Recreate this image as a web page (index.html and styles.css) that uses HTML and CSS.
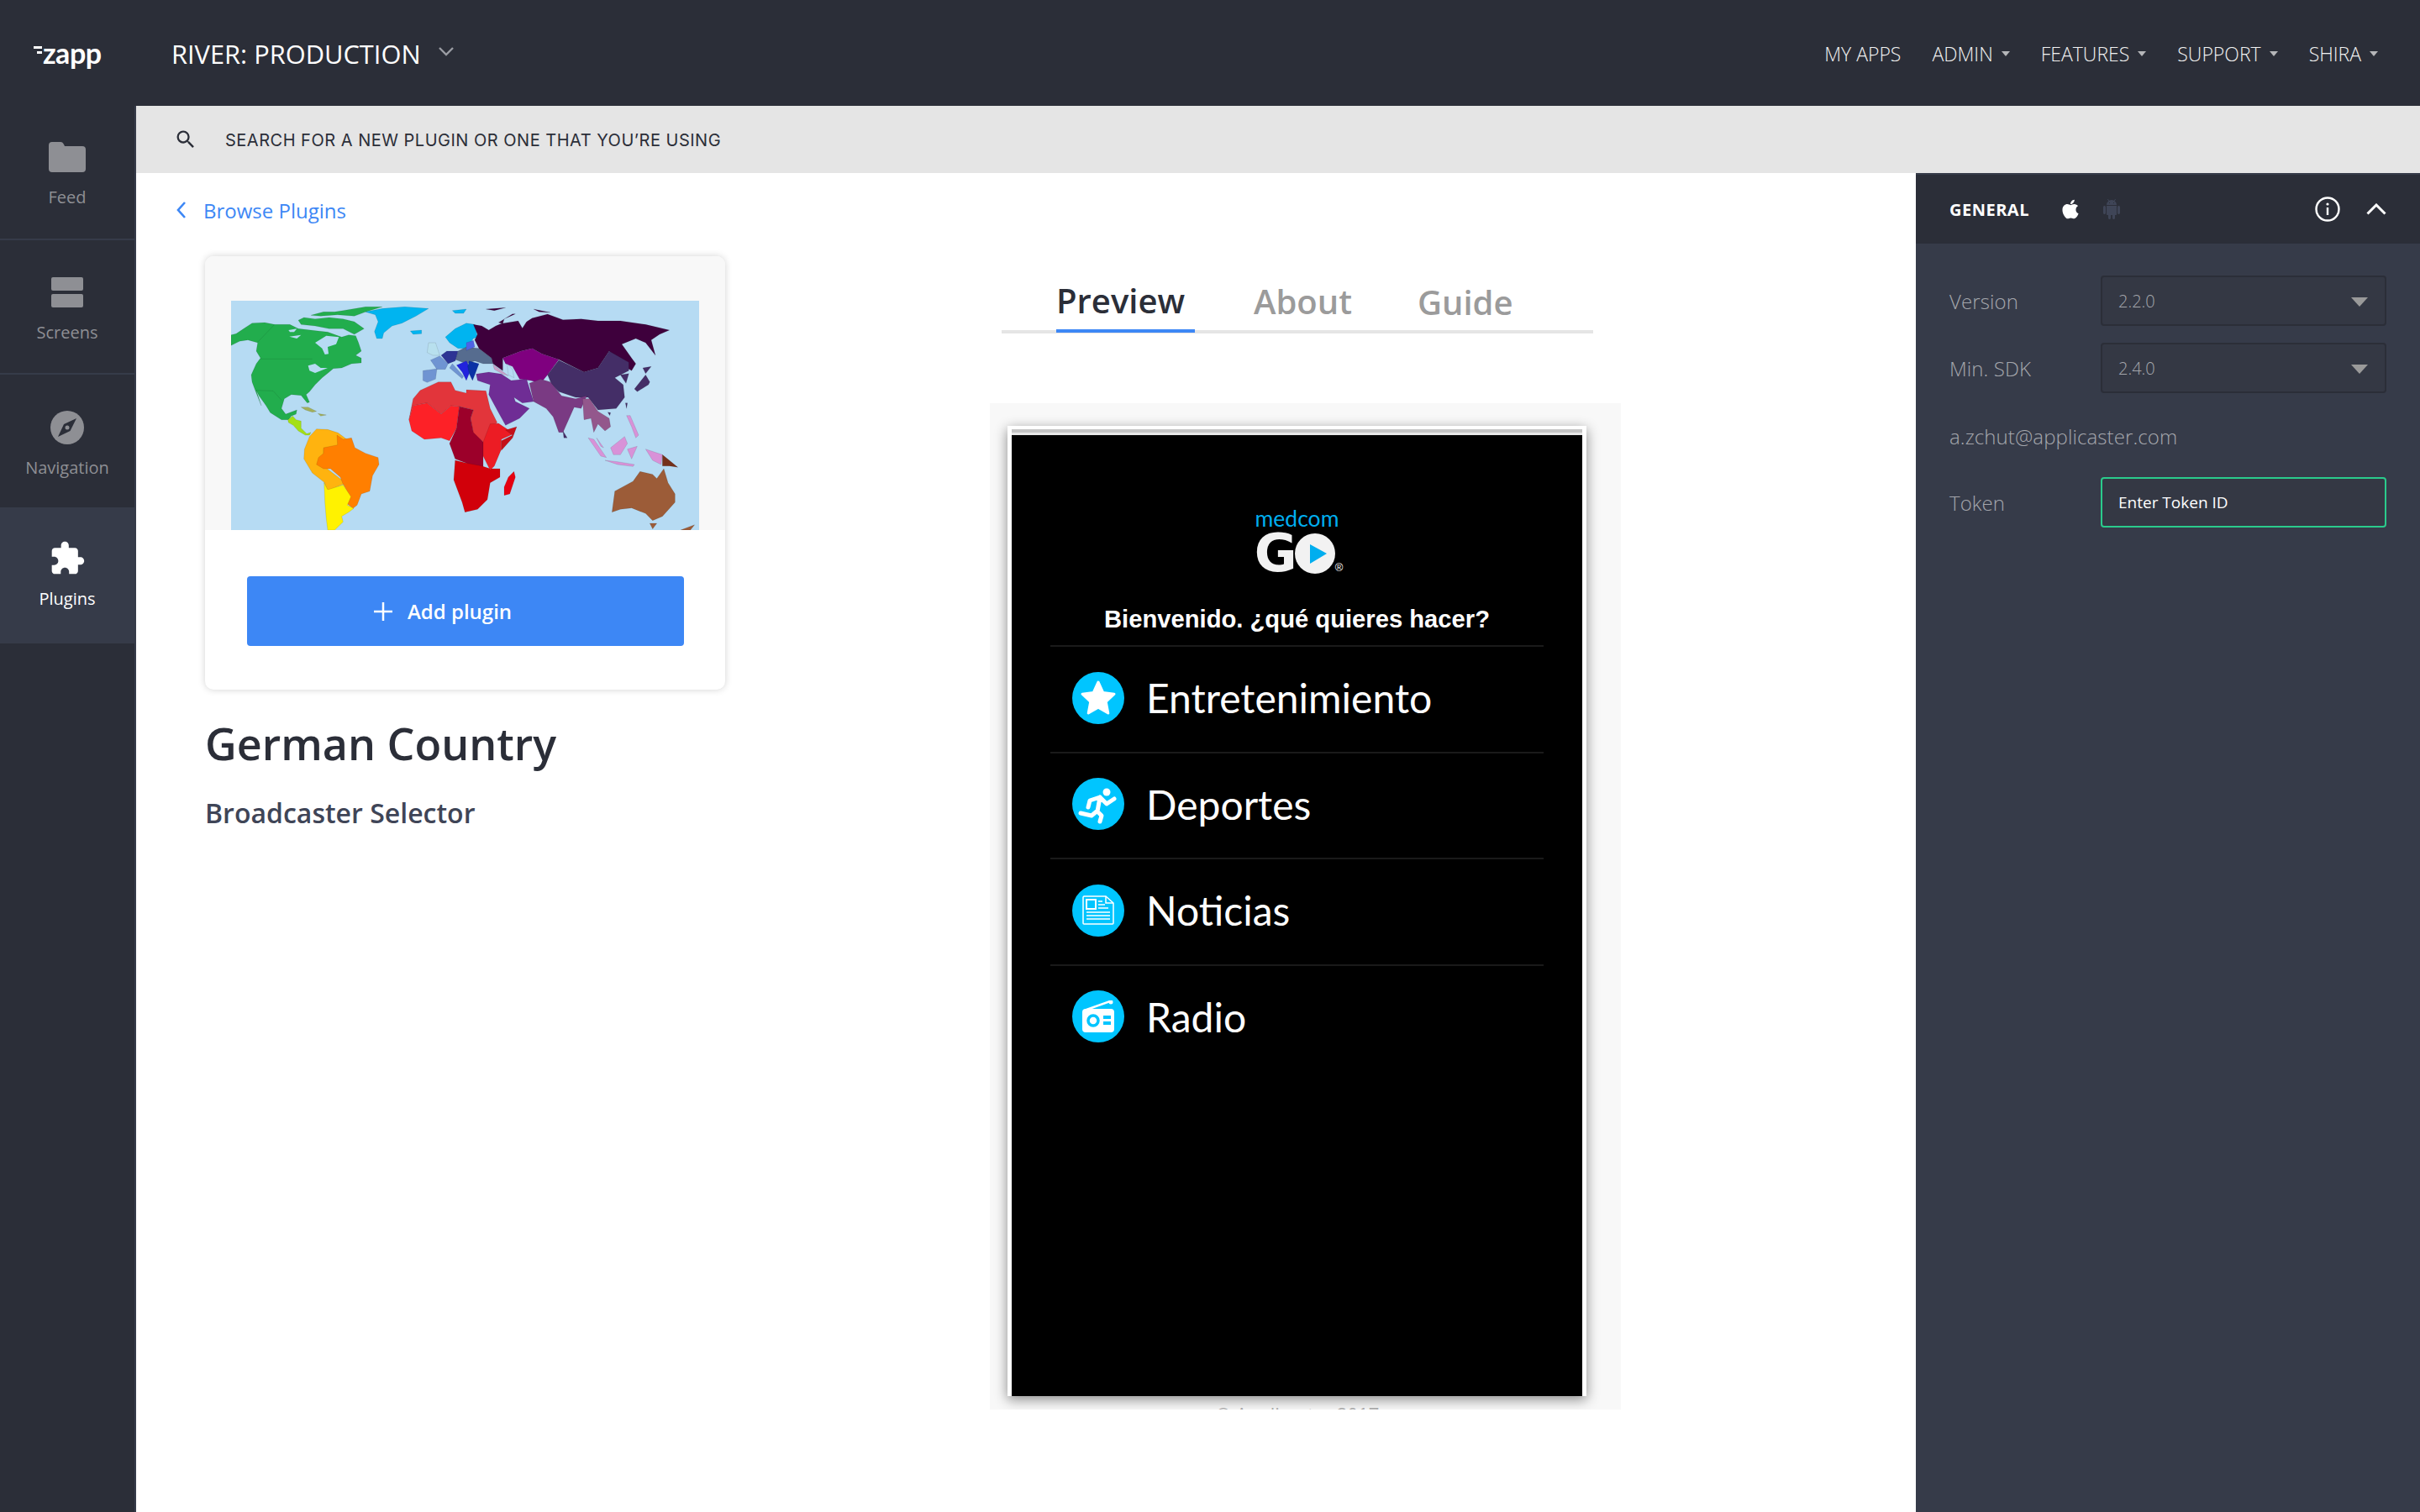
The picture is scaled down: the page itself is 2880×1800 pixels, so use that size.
FILE: index.html
```html
<!DOCTYPE html>
<html lang="en">
<head>
  <meta charset="UTF-8">
  <title>Zapp - Plugins</title>
  <link rel="stylesheet" href="styles.css">
</head>
<body>

<!-- Top bar -->
<header class="topbar">
  <div class="logo">
    <span class="logo-dashes"><i></i><i></i></span>
    <span class="logo-text">zapp</span>
  </div>
  <div class="app-title">RIVER: PRODUCTION</div>
  <svg class="title-chevron" viewBox="0 0 20 12"><path d="M2 2l8 8 8-8" fill="none" stroke="#9a9ca3" stroke-width="2.4"/></svg>
  <nav class="topnav">
    <a class="topnav-item">MY APPS</a>
    <a class="topnav-item has-caret">ADMIN</a>
    <a class="topnav-item has-caret">FEATURES</a>
    <a class="topnav-item has-caret">SUPPORT</a>
    <a class="topnav-item has-caret">SHIRA</a>
  </nav>
</header>

<div class="shell">

  <!-- Sidebar -->
  <aside class="sidebar">
    <a class="side-item">
      <span class="side-icon">
        <svg width="44" height="36" viewBox="0 0 44 36"><path d="M4 0h10c2 0 3 1 4 3l1 2h21a4 4 0 0 1 4 4v23a4 4 0 0 1-4 4H4a4 4 0 0 1-4-4V4a4 4 0 0 1 4-4z" fill="#8e8f94"/></svg>
      </span>
      Feed
    </a>
    <a class="side-item">
      <span class="side-icon">
        <svg width="38" height="36" viewBox="0 0 38 36"><rect width="38" height="16" rx="2" fill="#8e8f94"/><rect y="20" width="38" height="16" rx="2" fill="#8e8f94"/></svg>
      </span>
      Screens
    </a>
    <a class="side-item">
      <span class="side-icon">
        <svg width="40" height="40" viewBox="0 0 40 40"><circle cx="20" cy="20" r="20" fill="#8e8f94"/><path d="M31 9l-7.5 15L9 31l7-15z" fill="#2b2e38"/><circle cx="20" cy="20" r="2.5" fill="#8e8f94"/></svg>
      </span>
      Navigation
    </a>
    <a class="side-item active">
      <span class="side-icon">
        <svg width="44" height="44" viewBox="0 0 24 24"><path d="M20.5 11H19V7c0-1.1-.9-2-2-2h-4V3.5C13 2.12 11.88 1 10.5 1S8 2.12 8 3.5V5H4c-1.1 0-1.99.9-1.99 2v3.8H3.5c1.49 0 2.7 1.21 2.7 2.7s-1.21 2.7-2.7 2.7H2V20c0 1.1.9 2 2 2h3.8v-1.5c0-1.49 1.21-2.7 2.7-2.7 1.49 0 2.7 1.21 2.7 2.7V22H17c1.1 0 2-.9 2-2v-4h1.5c1.38 0 2.5-1.12 2.5-2.5S21.88 11 20.5 11z" fill="#fff"/></svg>
      </span>
      Plugins
    </a>
  </aside>

  <div class="main">

    <!-- Search -->
    <div class="searchbar">
      <svg class="search-icon" viewBox="0 0 24 24"><path d="M15.5 14h-.79l-.28-.27A6.47 6.47 0 0 0 16 9.5 6.5 6.5 0 1 0 9.5 16c1.61 0 3.09-.59 4.23-1.57l.27.28v.79l5 4.99L20.49 19l-4.99-5zm-6 0C7.01 14 5 11.99 5 9.5S7.01 5 9.5 5 14 7.01 14 9.5 11.99 14 9.5 14z" fill="#2b2e38"/></svg>
      <span class="search-text">SEARCH FOR A NEW PLUGIN OR ONE THAT YOU’RE USING</span>
    </div>

    <div class="workspace">

      <div class="content">
        <a class="back-link">
          <svg width="12" height="22" viewBox="0 0 12 22"><path d="M10 2l-8 9 8 9" fill="none" stroke="#3d87f5" stroke-width="2.6"/></svg>
          Browse Plugins
        </a>

        <div class="detail">

          <!-- Plugin card -->
          <div class="plugin-col">
            <div class="card">
              <div class="card-media">
                <svg class="world-map" viewBox="0 0 1671 819">
                  <rect width="1671" height="819" fill="#b6dbf3"/>
                  <g stroke="#000" stroke-opacity=".2" stroke-width="1.5" stroke-linejoin="round">
                    <!-- Americas -->
                    <polygon fill="#22ad4d" points="0,160 0,122 18,118 45,100 75,80 120,78 155,85 210,85 240,100 310,108 345,112 395,130 420,122 445,125 455,150 465,180 445,195 465,205 465,222 430,225 395,240 365,242 350,255 325,275 300,300 280,325 268,335 280,362 272,365 250,338 215,335 190,350 180,385 195,405 235,390 232,405 215,412 205,425 180,425 140,400 125,375 100,340 90,320 108,375 88,325 75,290 72,265 90,225 105,205 90,180 95,150 60,140 30,145"/>
                    <polygon fill="#22ad4d" points="240,70 260,60 300,65 350,60 400,65 440,75 475,100 440,120 400,100 350,100 300,90 250,85"/>
                    <polygon fill="#22ad4d" points="285,52 330,40 370,40 400,35 480,22 540,22 480,40 440,55 380,50 320,55"/>
                    <polygon fill="#b6dbf3" stroke="none" points="300,150 340,125 385,130 375,155 345,165 348,190 335,192 325,170"/>
                    <polygon fill="#b6dbf3" stroke="none" points="275,232 300,225 320,240 345,240 300,258 280,250"/>
                    <polygon fill="#b6dbf3" stroke="none" points="205,105 235,100 225,112 210,112"/>
                    <polygon fill="#b6dbf3" stroke="none" points="208,128 250,122 235,135"/>
                    <path d="M155 85L95 148M105 208H290M90 320L150 322L180 355" fill="none"/>
                    <polygon fill="#a4e014" points="203,425 220,412 232,425 250,430 250,455 270,475 285,470 280,480 265,480 240,465 222,445 205,435"/>
                    <polygon fill="#00b4f0" points="480,40 540,28 620,22 705,28 660,55 610,80 575,90 545,115 540,135 520,135 512,110 525,75 515,50"/>
                    <polygon fill="#00b4f0" points="640,108 680,105 680,118 650,120"/>
                    <polygon fill="#a3b05a" points="250,380 275,380 305,395 290,398 265,390"/>
                    <polygon fill="#a3b05a" points="310,403 340,408 320,412"/>
                    <polygon fill="#ffb30f" points="280,485 305,458 345,460 382,472 420,500 440,525 380,520 330,530 330,590 395,640 402,655 345,678 332,648 290,615 260,565 262,530"/>
                    <polygon fill="#ff7f00" points="378,480 400,495 430,490 442,525 480,545 525,560 528,585 505,625 495,680 465,690 450,730 435,742 415,725 425,700 400,655 390,630 355,600 330,600 305,585 312,560 330,545 330,525 380,515"/>
                    <polygon fill="#fff200" points="332,650 345,675 400,658 428,700 415,730 438,742 420,755 395,770 400,790 370,819 345,819 340,780 335,720"/>
                    <!-- Europe -->
                    <polygon fill="#b8e0ee" points="705,150 730,150 745,195 720,195 700,185"/>
                    <polygon fill="#6f94d2" points="712,212 745,197 775,225 765,245 735,245"/>
                    <polygon fill="#6f94d2" points="685,250 735,243 730,280 700,292 685,285"/>
                    <polygon fill="#6f94d2" points="790,225 830,270 825,278 780,240"/>
                    <polygon fill="#00b4f0" points="765,130 800,100 840,80 870,85 880,130 865,135 840,170 810,170 780,150"/>
                    <polygon fill="#00b4f0" points="790,35 840,30 830,45 800,45"/>
                    <polygon fill="#566c8f" points="800,210 810,180 840,165 885,170 930,205 935,225 900,225 870,215 840,225"/>
                    <polygon fill="#2d3494" points="750,195 770,180 810,180 800,215 775,225"/>
                    <polygon fill="#4e63e6" points="840,150 865,142 870,165 840,178"/>
                    <polygon fill="#2222dd" points="805,230 840,215 850,235 850,260 840,285 825,255"/>
                    <polygon fill="#0a32a5" points="850,215 885,225 870,265 862,285 850,260 845,235"/>
                    <!-- Africa -->
                    <polygon fill="#e2353b" points="675,320 740,290 785,290 800,320 840,330 840,318 910,322 925,385 950,435 920,460 925,500 900,505 865,475 855,420 865,390 815,378 785,375 750,405 700,365 650,375 635,425 650,350"/>
                    <polygon fill="#fd2127" points="635,425 650,375 700,365 750,405 785,375 815,378 805,455 780,500 750,490 690,495 645,465"/>
                    <polygon fill="#9c002a" points="815,378 865,390 855,420 865,470 900,505 900,600 860,610 840,580 800,565 780,510 805,455"/>
                    <polygon fill="#d1000a" points="800,570 840,580 895,590 925,600 960,600 960,630 925,650 915,710 880,745 835,755 825,720 795,640"/>
                    <polygon fill="#ec1c24" points="925,440 955,438 1010,475 965,495 965,530 940,590 925,605 900,555 900,505"/>
                    <polygon fill="#c41019" points="980,462 1020,450 1005,490 965,535 965,500 1005,480"/>
                    <polygon fill="#e60011" points="1010,610 1015,630 995,690 975,695 975,665 990,630"/>
                  </g>
                  <g transform="translate(840)" stroke="#000" stroke-opacity=".2" stroke-width="1.5" stroke-linejoin="round">
                    <!-- Asia and Oceania -->
                    <polygon fill="#3e003c" points="25,85 55,90 80,105 105,90 125,82 185,72 200,98 215,75 235,62 290,48 345,68 410,65 470,72 550,72 640,85 725,105 690,120 660,140 675,195 640,150 605,135 555,155 590,205 605,225 590,250 540,220 510,180 470,240 420,255 330,210 270,190 235,170 195,180 130,205 130,250 95,225 90,205 45,170 30,140 40,120"/>
                    <polygon fill="#3e003c" points="115,78 165,47 175,47 135,65 130,82"/>
                    <polygon fill="#3e003c" points="70,30 140,25 100,35"/>
                    <polygon fill="#3e003c" points="240,30 300,42 260,40"/>
                    <polygon fill="#7f007f" points="130,205 195,180 235,170 270,190 330,210 290,265 265,295 230,285 190,280 165,235 140,225"/>
                    <polygon fill="#b6dbf3" points="145,225 165,245 170,275 150,265"/>
                    <polygon fill="#442e67" points="290,265 330,212 420,255 470,240 510,180 580,220 580,250 530,275 560,300 565,345 535,385 470,390 435,345 390,345 330,325 305,300"/>
                    <polygon fill="#442e67" points="550,265 580,260 570,295"/>
                    <polygon fill="#442e67" points="600,315 640,265 655,290 650,300 610,325"/>
                    <polygon fill="#442e67" points="630,240 660,235 640,260"/>
                    <polygon fill="#442e67" points="345,465 360,490 348,490"/>
                    <polygon fill="#442e67" points="568,365 575,365 572,385"/>
                    <polygon fill="#442e67" points="505,398 515,400 512,410"/>
                    <polygon fill="#c9a0c9" points="95,228 125,250 150,268 130,262 100,245"/>
                    <polygon fill="#6f2d95" points="35,262 80,255 125,262 160,285 215,280 240,360 200,365 170,345 175,360 225,385 190,420 140,445 115,400 80,335 85,300 40,285"/>
                    <polygon fill="#7a3a83" points="225,295 265,280 300,290 340,340 390,350 430,340 410,385 385,380 345,470 330,470 310,415 285,385 240,360"/>
                    <polygon fill="#93578c" points="415,350 440,350 470,395 510,420 515,450 495,465 470,440 455,470 445,420 420,425"/>
                    <polygon fill="#d892d8" points="435,490 455,495 500,560 480,555"/>
                    <polygon fill="#d892d8" points="465,490 490,525 480,520"/>
                    <polygon fill="#d892d8" points="515,525 565,485 575,510 550,550 525,550"/>
                    <polygon fill="#d892d8" points="495,570 540,575 600,585 595,592 540,585"/>
                    <polygon fill="#d892d8" points="572,410 585,410 615,480 605,490 590,450"/>
                    <polygon fill="#d892d8" points="575,530 610,520 590,565"/>
                    <polygon fill="#d892d8" points="640,530 700,550 695,585 665,570"/>
                    <polygon fill="#74301a" points="700,550 755,595 725,590 700,590"/>
                    <polygon fill="#9c5c38" points="520,755 530,680 595,645 620,610 665,620 680,635 705,600 720,650 745,690 745,720 700,770 665,785 640,760 590,740 550,745"/>
                    <polygon fill="#9c5c38" points="655,795 680,795 665,815"/>
                    <polygon fill="#9c5c38" points="765,819 815,800 800,819"/>
                  </g>
                </svg>
              </div>
              <div class="card-actions">
                <a class="add-button">
                  <svg width="22" height="22" viewBox="0 0 22 22"><path d="M11 0v22M0 11h22" stroke="#fff" stroke-width="2.5"/></svg>
                  Add plugin
                </a>
              </div>
            </div>
            <h1 class="plugin-name">German Country</h1>
            <h2 class="plugin-type">Broadcaster Selector</h2>
          </div>

          <!-- Preview -->
          <div class="preview-col">
            <div class="tabs">
              <a class="tab active">Preview</a>
              <a class="tab">About</a>
              <a class="tab tab-guide">Guide</a>
            </div>
            <div class="preview-panel">
              <div class="phone">
                <div class="phone-top"></div>
                <div class="phone-screen">
                  <div class="app-logo">
                    <div class="medcom">medcom</div>
                    <div class="go">
                      <span class="go-g">G</span>
                      <svg width="48" height="48" viewBox="0 0 48 48"><circle cx="24" cy="24" r="24" fill="#f2f2f2"/><path d="M18 13l20 11-20 12z" fill="#00aeef"/></svg>
                      <span class="go-reg">®</span>
                    </div>
                  </div>
                  <div class="welcome">Bienvenido. ¿qué quieres hacer?</div>
                  <div class="menu">
                    <div class="menu-row">
                      <span class="menu-icon">
                        <svg width="48" height="48" viewBox="0 0 24 24"><path d="M12 2.5l2.9 6.3 6.6.8-4.900 4.600 1.300 6.800L12 17.600l-5.900 3.400 1.300-6.800L2.500 9.600l6.600-.8z" fill="#fff" stroke="#fff" stroke-width="1.5" stroke-linejoin="round"/></svg>
                      </span>
                      Entretenimiento
                    </div>
                    <div class="menu-row">
                      <span class="menu-icon">
                        <svg width="62" height="62" viewBox="0 0 62 62" fill="none" stroke="#fff" stroke-width="5" stroke-linecap="round" stroke-linejoin="round"><circle cx="41" cy="17" r="4.5" fill="#fff" stroke="none"/><path d="M33 23L30 40M33 23l8 8 9-6M33 23l-12 4-2 8M30 40l5 5-2 7M29 40l-6 5-13-3"/></svg>
                      </span>
                      Deportes
                    </div>
                    <div class="menu-row">
                      <span class="menu-icon">
                        <svg width="38" height="35" viewBox="0 0 38 35" fill="none" stroke="#fff"><path d="M2 1h26l9 8v24a1 1 0 0 1-1 1H2a1 1 0 0 1-1-1V2z" stroke-width="1.5"/><path d="M28 1v8h9" stroke-width="1.5"/><rect x="5" y="5" width="11" height="11" stroke-width="2"/><path d="M19 7h5M19 11h8M19 15h12M5 20h28M5 24h28M5 28h28" stroke-width="1.5"/></svg>
                      </span>
                      Noticias
                    </div>
                    <div class="menu-row">
                      <span class="menu-icon">
                        <svg width="38" height="38" viewBox="0 0 38 38"><path d="M5 11L33 1" stroke="#fff" stroke-width="2.5" stroke-linecap="round"/><circle cx="34" cy="2" r="2.5" fill="#fff"/><rect y="10" width="38" height="28" rx="4" fill="#fff"/><circle cx="13" cy="24" r="6" fill="none" stroke="#00c5ff" stroke-width="3.5"/><path d="M25 20h9M25 27h9" stroke="#00c5ff" stroke-width="4"/></svg>
                      </span>
                      Radio
                    </div>
                  </div>
                </div>
              </div>
              <div class="preview-caption">© Applicaster 2017</div>
            </div>
          </div>

        </div>
      </div>

      <!-- Right panel -->
      <aside class="panel">
        <div class="panel-head">
          <span class="panel-title">GENERAL</span>
          <svg class="icon-apple" viewBox="0 0 384 512"><path d="M318.7 268.7c-.2-36.7 16.4-64.4 50-84.8-18.8-26.9-47.2-41.7-84.7-44.6-35.5-2.8-74.3 20.7-88.5 20.7-15 0-49.4-19.7-76.4-19.7C63.3 141.2 4 184.8 4 273.5q0 39.3 14.4 81.2c12.8 36.7 59 126.7 107.2 125.2 25.2-.6 43-17.9 75.8-17.9 31.8 0 48.3 17.9 76.4 17.9 48.6-.7 90.4-82.5 102.6-119.3-65.2-30.7-61.7-90-61.7-91.9zm-56.6-164.2c27.3-32.4 24.8-61.9 24-72.5-24.1 1.4-52 16.4-67.9 34.9-17.5 19.8-27.8 44.3-25.6 71.9 26.1 2 49.9-11.4 69.5-34.3z" fill="#fff"/></svg>
          <svg class="icon-android" viewBox="2 0 20 24"><path d="M6 18c0 .55.45 1 1 1h1v3.5c0 .83.67 1.5 1.5 1.5s1.5-.67 1.5-1.5V19h2v3.5c0 .83.67 1.5 1.5 1.5s1.5-.67 1.5-1.5V19h1c.55 0 1-.45 1-1V8H6v10zM3.5 8C2.67 8 2 8.67 2 9.5v7c0 .83.67 1.5 1.5 1.5S5 17.33 5 16.5v-7C5 8.67 4.33 8 3.5 8zm17 0c-.83 0-1.5.67-1.5 1.5v7c0 .83.67 1.5 1.5 1.5s1.5-.67 1.5-1.5v-7c0-.83-.67-1.5-1.5-1.5zm-4.97-5.84l1.3-1.3c.2-.2.2-.51 0-.71-.2-.2-.51-.2-.71 0l-1.48 1.48C13.85 1.23 12.95 1 12 1c-.96 0-1.86.23-2.66.63L7.85.15c-.2-.2-.51-.2-.71 0-.2.2-.2.51 0 .71l1.31 1.31C6.97 3.26 6 5.01 6 7h12c0-1.99-.97-3.75-2.47-4.84zM10 5H9V4h1v1zm5 0h-1V4h1v1z" fill="#3f4557"/></svg>
          <svg class="icon-info" viewBox="0 0 30 30"><circle cx="15" cy="15" r="13.5" fill="none" stroke="#fff" stroke-width="2.4"/><path d="M15 13v9" stroke="#fff" stroke-width="2.4"/><circle cx="15" cy="9" r="1.6" fill="#fff"/></svg>
          <svg class="icon-collapse" viewBox="0 0 24 14"><path d="M1.5 12.5L12 2l10.5 10.5" fill="none" stroke="#fff" stroke-width="3"/></svg>
        </div>
        <div class="panel-body">
          <div class="form-row">
            <label class="form-label">Version</label>
            <div class="form-select">2.2.0</div>
          </div>
          <div class="form-row">
            <label class="form-label">Min. SDK</label>
            <div class="form-select">2.4.0</div>
          </div>
          <div class="form-row form-email">
            <span class="form-label">a.zchut@applicaster.com</span>
          </div>
          <div class="form-row">
            <label class="form-label">Token</label>
            <div class="form-input">Enter Token ID</div>
          </div>
        </div>
      </aside>

    </div>
  </div>
</div>

</body>
</html>
```

FILE: styles.css
```css
* { box-sizing: border-box; }

body {
  margin: 0;
  width: 2880px;
  height: 1800px;
  overflow: hidden;
  background: #fff;
  font-family: "Open Sans", sans-serif;
  color: #2b2e38;
}

/* top bar */
.topbar {
  height: 126px;
  background: #2b2e38;
  display: flex;
  align-items: center;
  padding-left: 40px;
  color: #fff;
}
.logo {
  width: 164px;
  display: flex;
  align-items: center;
  gap: 1px;
}
.logo-dashes { display: flex; flex-direction: column; align-items: flex-end; gap: 3px; margin-top: -8px; }
.logo-dashes i { display: block; width: 10px; height: 3px; background: #fff; }
.logo-dashes i + i { width: 6px; }
.logo-text {
  font-family: Lato, sans-serif;
  font-weight: 700;
  font-size: 34px;
  line-height: 32px;
  letter-spacing: -.5px;
}
.app-title { font-size: 30.8px; line-height: 40px; margin-top: 2px; }
.title-chevron { width: 20px; height: 12px; margin: -4px 0 0 20px; }
.topnav {
  margin-left: auto;
  margin-top: 2px;
  padding-right: 50px;
  display: flex;
  gap: 37px;
}
.topnav-item {
  font-size: 23px;
  font-weight: 300;
  line-height: 30px;
  color: #f2f2f2;
}
.has-caret::after {
  content: "";
  display: inline-block;
  margin-left: 10px;
  vertical-align: 6px;
  border-left: 5px solid transparent;
  border-right: 5px solid transparent;
  border-top: 6px solid #b5b6b9;
}

.shell { display: flex; height: 1674px; }

/* sidebar */
.sidebar {
  width: 162px;
  background: #2b2e38;
  border-right: 2px solid #363b49;
}
.side-item {
  width: 160px;
  height: 160px;
  padding-top: 41px;
  border-bottom: 2px solid #363b49;
  display: flex;
  flex-direction: column;
  align-items: center;
  gap: 14px;
  font-size: 20px;
  line-height: 28px;
  color: #8e8f94;
}
.side-icon { height: 40px; display: flex; align-items: center; justify-content: center; }
.side-item:nth-child(2) { padding-top: 42px; }
.side-item:nth-child(3) { height: 158px; padding-top: 43px; border-bottom: 0; }
.side-item.active {
  width: 162px;
  height: 162px;
  padding-right: 2px;
  background: #363b49;
  border-bottom: 0;
  color: #fff;
}

.main { width: 2718px; display: flex; flex-direction: column; }

/* search */
.searchbar {
  height: 80px;
  background: #e5e5e5;
  display: flex;
  align-items: center;
  padding-left: 45px;
}
.search-icon { width: 28px; height: 28px; }
.search-text {
  margin: 2px 0 0 33px;
  font-family: Inter, sans-serif;
  font-size: 20px;
  letter-spacing: .5px;
  color: #2b2e38;
}

.workspace { flex: 1; display: flex; min-height: 0; }
.content { flex: 1; min-width: 0; }

.back-link {
  display: flex;
  align-items: center;
  gap: 20px;
  height: 34px;
  margin: 27px 0 0 48px;
  font-size: 24px;
  color: #3d87f5;
}

.detail { display: flex; margin: 38px 0 0 82px; }

/* plugin card */
.plugin-col { width: 619px; }
.card {
  border-radius: 10px;
  overflow: hidden;
  background: #fff;
  box-shadow: 0 0 8px rgba(0,0,0,0.18);
}
.card-media { height: 326px; padding: 53px 31px 0; background: #f8f8f8; }
.world-map { display: block; width: 557px; height: 273px; filter: blur(.5px); }
.card-actions { padding: 55px 49px 52px 50px; }
.add-button {
  height: 83px;
  display: flex;
  align-items: center;
  gap: 18px;
  padding-left: 151px;
  border-radius: 4px;
  background: #3d87f5;
  color: #fff;
  font-size: 24px;
  font-weight: 600;
}
.plugin-name { margin: 35px 0 0; font-size: 52px; line-height: 58px; font-weight: 600; color: #2b2e38; }
.plugin-type { margin: 32px 0 0; font-size: 32px; line-height: 44px; font-weight: 600; color: #3f4557; }

/* preview */
.preview-col { width: 751px; margin-left: 315px; }
.tabs {
  height: 92px;
  margin: 0 33px 0 14px;
  padding-left: 65px;
  border-bottom: 4px solid #e5e5e5;
  display: flex;
  align-items: flex-end;
}
.tab {
  font-size: 40px;
  line-height: 56px;
  font-weight: 600;
  color: #9b9b9b;
  padding-bottom: 6px;
  margin-right: 78px;
}
.tab.active {
  color: #2b2e38;
  width: 165px;
  margin-right: 70px;
  border-bottom: 4px solid #3d87f5;
  margin-bottom: -3px;
}
.tab-guide { padding-bottom: 5px; }
.preview-panel {
  height: 1198px;
  margin-top: 83px;
  padding: 27px 40px 0 21px;
  background: #f8f8f8;
  overflow: hidden;
}
.phone {
  width: 689px;
  padding: 4px 5px 0 5px;
  background: #fff;
  box-shadow: 0 4px 14px rgba(0,0,0,0.45);
}
.phone-top { height: 7px; border-top: 4px solid #c4c4c4; background: #e8e8e8; }
.phone-screen { height: 1144px; background: #000; color: #fff; }
.preview-caption {
  margin-top: 6px;
  text-align: center;
  font-size: 22px;
  line-height: 30px;
  color: #aaa;
}

.app-logo { display: flex; flex-direction: column; align-items: center; padding-top: 84px; }
.medcom {
  font-family: Lato, sans-serif;
  font-size: 26.5px;
  line-height: 30px;
  color: #00aeef;
}
.go { display: flex; align-items: center; height: 48px; margin-top: 3px; padding-left: 4px; }
.go-g {
  font-family: "DejaVu Sans", sans-serif;
  font-weight: 700;
  font-size: 62px;
  line-height: 48px;
  color: #f2f2f2;
  margin-right: -3px;
}
.go-reg { align-self: flex-end; font-family: "Liberation Sans", sans-serif; font-size: 13px; line-height: 14px; }
.welcome {
  margin-top: 36px;
  text-align: center;
  font-family: "Liberation Sans", sans-serif;
  font-weight: 700;
  font-size: 29.2px;
  line-height: 36px;
}
.menu { margin: 13px 46px 0; }
.menu-row {
  height: 126.5px;
  padding: 0 0 3px 26px;
  border-top: 2px solid #1a1a1a;
  display: flex;
  align-items: center;
  gap: 26px;
  font-family: Lato, sans-serif;
  font-size: 48px;
}
.menu-icon {
  width: 62px;
  height: 62px;
  border-radius: 50%;
  background: #00c5ff;
  display: flex;
  align-items: center;
  justify-content: center;
}

/* right panel */
.panel { width: 600px; background: #363b49; }
.panel-head {
  height: 82px;
  margin-top: 2px;
  background: #2b2e38;
  display: flex;
  align-items: center;
  padding-left: 40px;
}
.panel-title { font-size: 20px; font-weight: 700; color: #fff; letter-spacing: .5px; }
.icon-apple { width: 22px; height: 26px; margin-left: 38px; }
.icon-android { width: 20px; height: 24px; margin-left: 28px; }
.icon-info { width: 30px; height: 30px; margin-left: auto; }
.icon-collapse { width: 24px; height: 14px; margin: 0 40px 0 31px; }
.panel-body { padding: 38px 40px 0; display: flex; flex-direction: column; gap: 20px; }
.form-row { display: flex; align-items: center; height: 60px; }
.form-email { padding-top: 2px; }
.form-label { width: 180px; flex: none; font-size: 24px; font-weight: 300; letter-spacing: .1px; color: #a5a7ad; white-space: nowrap; }
.form-select {
  position: relative;
  width: 340px;
  height: 60px;
  padding-left: 19px;
  line-height: 58px;
  font-size: 20px;
  font-weight: 300;
  color: #a5a7ad;
  background: #343844;
  border: 2px solid #2b2e38;
  border-radius: 4px;
}
.form-select::after {
  content: "";
  position: absolute;
  right: 20px;
  top: 24px;
  border-left: 10px solid transparent;
  border-right: 10px solid transparent;
  border-top: 11px solid #9a9a9a;
}
.form-input {
  width: 340px;
  height: 60px;
  padding-left: 19px;
  line-height: 56px;
  font-size: 19px;
  color: #fff;
  background: #343844;
  border: 2px solid #2acb8c;
  border-radius: 4px;
}
```
